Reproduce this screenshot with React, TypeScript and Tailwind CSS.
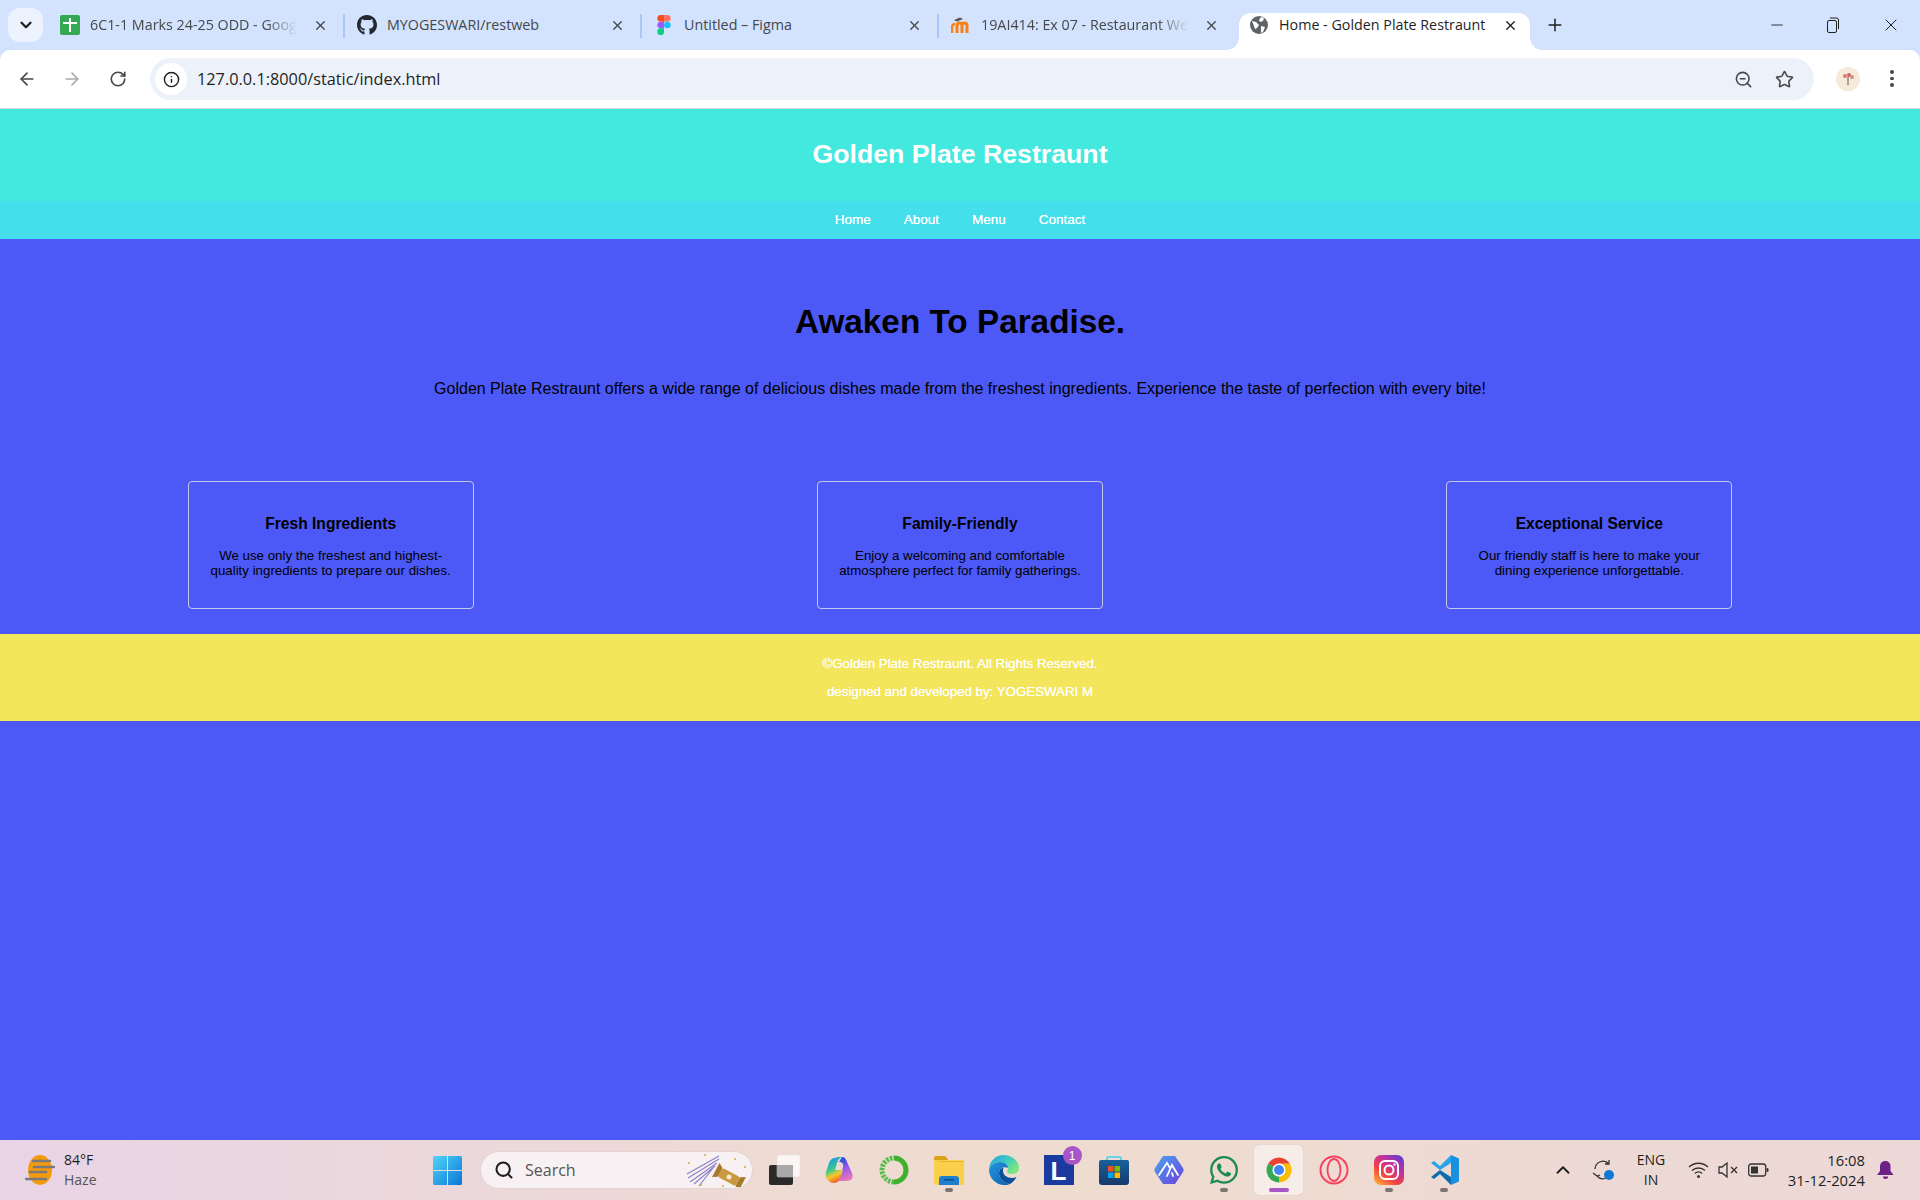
import { ArrowLeft, ArrowRight, RotateCw, Info, ZoomOut, Star, Plus, X, Minus, ChevronDown, ChevronUp, Search } from 'lucide-react';
import { FaGithub, FaWhatsapp } from 'react-icons/fa';
import { ReactNode } from 'react';

const cards = [
  { title: 'Fresh Ingredients', text: 'We use only the freshest and highest-quality ingredients to prepare our dishes.' },
  { title: 'Family-Friendly', text: 'Enjoy a welcoming and comfortable atmosphere perfect for family gatherings.' },
  { title: 'Exceptional Service', text: 'Our friendly staff is here to make your dining experience unforgettable.' },
];

function SheetsIcon() {
  return (
    <svg width="20" height="20" viewBox="0 0 20 20">
      <rect width="20" height="20" rx="2" fill="#34a853" />
      <path d="M10 3v14M3 8h14" stroke="#fff" strokeWidth="2" />
    </svg>
  );
}

function FigmaIcon() {
  return (
    <svg width="14" height="20" viewBox="0 0 14 21">
      <path d="M3.5 0H7v7H3.5a3.5 3.5 0 0 1 0-7z" fill="#f24e1e" />
      <path d="M7 0h3.5a3.5 3.5 0 0 1 0 7H7z" fill="#ff7262" />
      <path d="M3.5 7H7v7H3.5a3.5 3.5 0 0 1 0-7z" fill="#a259ff" />
      <circle cx="10.5" cy="10.5" r="3.5" fill="#1abcfe" />
      <path d="M3.5 14H7v3.5A3.5 3.5 0 1 1 3.5 14z" fill="#0acf83" />
    </svg>
  );
}

function MoodleIcon() {
  return (
    <svg width="20" height="18" viewBox="0 0 20 18">
      <path d="M3 4l6-2.5 3 1.5-6 2.5z" fill="#555" />
      <path d="M6 17V9.5a2.5 2.5 0 0 1 5 0V17M11 17V9.5a2.5 2.5 0 0 1 5 0V17" fill="none" stroke="#f98012" strokeWidth="3" />
      <path d="M1 17v-6a3 3 0 0 1 3-3" fill="none" stroke="#f98012" strokeWidth="2.5" />
    </svg>
  );
}

function GlobeIcon() {
  return (
    <svg width="20" height="20" viewBox="0 0 20 20">
      <circle cx="10" cy="10" r="9" fill="#5f6368" />
      <path d="M3 6l4 1 3 3-2 3-2 1-1-3zM12 2l3 1-1 3-3 1-1-2zM12 11l4 1-2 5-2 1z" fill="#fff" />
    </svg>
  );
}

function Tab({ icon, title, fade }: { icon: ReactNode; title: string; fade?: boolean }) {
  return (
    <div className="flex h-[50px] w-[297px] shrink-0 items-center pl-3 pr-[17px]">
      <span className="flex w-5 shrink-0 justify-center">{icon}</span>
      <span className={`ml-[10px] whitespace-nowrap text-[14.3px] text-[#45474a] ${fade ? '[mask-image:linear-gradient(to_right,black_85%,transparent)]' : ''}`}>{title}</span>
      <X size={15} strokeWidth={2.2} className="ml-auto text-[#45474a]" />
    </div>
  );
}

function WinLogo() {
  return (
    <svg width="29" height="29" viewBox="0 0 29 29">
      <defs>
        <linearGradient id="wl" x1="0" y1="0" x2="1" y2="1">
          <stop offset="0" stopColor="#4fd4f7" />
          <stop offset="1" stopColor="#0a77d6" />
        </linearGradient>
      </defs>
      <path d="M0 1.5A1.5 1.5 0 0 1 1.5 0H14v14H0zM15 0h12.5A1.5 1.5 0 0 1 29 1.5V14H15zM0 15h14v14H1.500A1.500 1.500 0 0 1 0 27.500zM15 15h14v12.500a1.500 1.500 0 0 1-1.500 1.500H15z" fill="url(#wl)" />
    </svg>
  );
}

function Popper() {
  return (
    <svg width="62" height="34" viewBox="0 0 62 34">
      <g stroke="#8d84c6" strokeWidth="1.2" fill="none">
        <path d="M2 21L34 3M3 25L34 6M5 29L32 10M9 31L30 13M14 33L28 15" />
      </g>
      <g transform="rotate(28 44 24)">
        <rect x="34" y="19" width="20" height="10" rx="2" fill="#c9993f" />
        <path d="M34 19l-5-3v16l5-3zM54 19l5-3v16l-5-3z" fill="#a77a2a" />
        <circle cx="44" cy="24" r="2.500" fill="#f6e8c8" />
      </g>
      <g fill="#d6a93c">
        <circle cx="4" cy="10" r="1" /><circle cx="20" cy="2" r="1" /><circle cx="50" cy="6" r="1" /><circle cx="60" cy="14" r="1" /><circle cx="16" cy="32" r="1" /><circle cx="38" cy="33" r="1" />
      </g>
    </svg>
  );
}

function Stack() {
  return (
    <svg width="34" height="32" viewBox="0 0 34 32">
      <rect x="2" y="11" width="24" height="20" rx="2" fill="#2a2a2a" />
      <rect x="10" y="1" width="23" height="22" rx="2" fill="#ffffff" fillOpacity=".75" stroke="#ddd" strokeWidth=".5" />
      <rect x="10" y="11" width="16" height="12" fill="#a9a9a9" />
    </svg>
  );
}

function Copilot() {
  return (
    <svg width="30" height="30" viewBox="0 0 30 30">
      <defs>
        <linearGradient id="cp1" x1="0.3" y1="0" x2="0.6" y2="1">
          <stop offset="0" stopColor="#1596e8" />
          <stop offset=".45" stopColor="#39c98e" />
          <stop offset=".7" stopColor="#f5c92e" />
          <stop offset="1" stopColor="#f0552a" />
        </linearGradient>
        <linearGradient id="cp2" x1="0.4" y1="0" x2="0.7" y2="1">
          <stop offset="0" stopColor="#1550d8" />
          <stop offset=".45" stopColor="#9a55ee" />
          <stop offset="1" stopColor="#f07ab8" />
        </linearGradient>
      </defs>
      <path d="M18 2c3 0 4 2 5 5l5 11c2 5-1 8-5 8H12c3-1 4-4 5-7l2-7c1-3-1-5-4-5z" fill="url(#cp2)" />
      <path d="M11 3c1-1 3-1 7-1-3 1-4 3-5 6l-2 7 8 0-2 6c-1 4-3 7-7 7-3 0-4-1-5-2-3-2-4-5-3-9l3-9c1-3 3-5 6-5z" fill="url(#cp1)" />
    </svg>
  );
}

function GreenRing() {
  return (
    <svg width="30" height="30" viewBox="0 0 30 30">
      <path d="M15 3a12 12 0 0 1 0 24" fill="none" stroke="#3eb22c" strokeWidth="5" />
      <path d="M15 27a12 12 0 0 1 0-24" fill="none" stroke="#56bd48" strokeWidth="5" strokeDasharray="2.500 1.200" />
    </svg>
  );
}

function Folder() {
  return (
    <svg width="30" height="30" viewBox="0 0 30 30">
      <path d="M0 3a2 2 0 0 1 2-2h9l3 3v6H0z" fill="#d9a21c" />
      <path d="M0 5h28a2 2 0 0 1 2 2v21a2 2 0 0 1-2 2H2a2 2 0 0 1-2-2z" fill="#fbcf4a" />
      <rect x="5" y="6" width="25" height="1" fill="#e8b530" />
      <path d="M5 24a3 3 0 0 1 3-3h14a3 3 0 0 1 3 3v6H5z" fill="#1d7fc9" />
      <rect x="10" y="24" width="10" height="1.500" fill="#0c4f8f" />
    </svg>
  );
}

function Edge() {
  return (
    <svg width="30" height="30" viewBox="0 0 30 30">
      <defs>
        <linearGradient id="eg" x1="0" y1="0" x2="1" y2=".6">
          <stop offset="0" stopColor="#1f9fdc" />
          <stop offset=".55" stopColor="#3fc9c4" />
          <stop offset="1" stopColor="#7de77a" />
        </linearGradient>
        <linearGradient id="eb" x1="0" y1="0" x2="1" y2="1">
          <stop offset="0" stopColor="#2398df" />
          <stop offset="1" stopColor="#0d5fae" />
        </linearGradient>
      </defs>
      <path d="M15 0c8 0 15 6 15 13 0 4-3 6-7 6-3 0-5-1-5-3 0-1 1-1 1-3 0-3-3-6-8-6C6 7 1 10 0 15 0 6 7 0 15 0z" fill="url(#eg)" />
      <path d="M0 15c1-5 6-8 11-8 5 0 8 3 8 6-5-2-9 1-9 5 0 5 4 10 11 11-2 1-4 1-6 1C7 30 0 23 0 15z" fill="url(#eb)" />
      <path d="M10 18c0-3 2-5 5-5.500-1 1-1 2-1 3.500 0 4 4 7 9 7 1.500 0 3-.3 4.500-1-1.500 3-4 5.500-6.500 7-7-1-11-6-11-11z" fill="#0a4f9c" />
    </svg>
  );
}

function StoreBag() {
  return (
    <svg width="30" height="30" viewBox="0 0 30 30">
      <defs>
        <linearGradient id="st" x1="0" y1="0" x2="0" y2="1">
          <stop offset="0" stopColor="#1a5f99" />
          <stop offset="1" stopColor="#163a6c" />
        </linearGradient>
      </defs>
      <path d="M8 6V3.500A1.500 1.500 0 0 1 9.500 2h11A1.500 1.500 0 0 1 22 3.500V6" fill="none" stroke="#3fd0f0" strokeWidth="1.600" />
      <path d="M0 7a2 2 0 0 1 2-2h26a2 2 0 0 1 2 2v20a3 3 0 0 1-3 3H3a3 3 0 0 1-3-3z" fill="url(#st)" />
      <rect x="9" y="11" width="5.500" height="5.500" fill="#f25022" />
      <rect x="15.500" y="11" width="5.500" height="5.500" fill="#7fba00" />
      <rect x="9" y="17.500" width="5.500" height="5.500" fill="#00a4ef" />
      <rect x="15.500" y="17.500" width="5.500" height="5.500" fill="#ffb900" />
    </svg>
  );
}

function ArcHex() {
  return (
    <svg width="30" height="30" viewBox="0 0 30 30">
      <defs>
        <linearGradient id="ah" x1="0" y1="0" x2="1" y2="1">
          <stop offset="0" stopColor="#4aa6ec" />
          <stop offset="1" stopColor="#6a3fe0" />
        </linearGradient>
      </defs>
      <path d="M9 1h12l8 12a4 4 0 0 1 0 4l-8 12H9L1 17a4 4 0 0 1 0-4z" fill="url(#ah)" />
      <path d="M5 20l8-12 3 5M13 21l5-11 6 10M19 21l-1-3" fill="none" stroke="#fff" strokeWidth="1.800" strokeLinecap="round" />
    </svg>
  );
}

function Chrome() {
  return (
    <svg width="30" height="30" viewBox="0 0 48 48">
      <path d="M24 24L6.680 14A20 20 0 0 1 41.320 14H24z" fill="#ea4335" />
      <path d="M24 24V14H41.320A20 20 0 0 1 24 44z" fill="#fbbc04" />
      <path d="M24 24V44A20 20 0 0 1 6.680 14z" fill="#34a853" />
      <circle cx="24" cy="24" r="10.500" fill="#fff" />
      <circle cx="24" cy="24" r="8" fill="#4285f4" />
    </svg>
  );
}

function Opera() {
  return (
    <svg width="30" height="30" viewBox="0 0 30 30" fill="none" stroke="#f5435f">
      <circle cx="15" cy="15" r="13.500" strokeWidth="2" />
      <ellipse cx="15" cy="15" rx="6.500" ry="11" strokeWidth="1.800" />
    </svg>
  );
}

function Instagram() {
  return (
    <svg width="30" height="30" viewBox="0 0 30 30">
      <defs>
        <linearGradient id="ig" x1="0.1" y1="1" x2="0.9" y2="0">
          <stop offset="0" stopColor="#fdb03a" />
          <stop offset=".35" stopColor="#f2413e" />
          <stop offset=".65" stopColor="#c4319f" />
          <stop offset="1" stopColor="#5b3fd0" />
        </linearGradient>
      </defs>
      <rect width="30" height="30" rx="7" fill="url(#ig)" />
      <rect x="6" y="6" width="18" height="18" rx="5" fill="none" stroke="#fff" strokeWidth="2" />
      <circle cx="15" cy="15" r="4.500" fill="none" stroke="#fff" strokeWidth="2" />
      <circle cx="20.500" cy="9.500" r="1.200" fill="#fff" />
    </svg>
  );
}

function VSCode() {
  return (
    <svg width="30" height="30" viewBox="0 0 30 30">
      <path d="M22 8L11 15 2 8 5 6l6 5L22 0z" fill="#2aa4ea" />
      <path d="M22 22L11 15 2 22l3 2 6-5 11 11z" fill="#0a6db3" />
      <path d="M22 0l8 3.500v23L22 30z" fill="#1b90df" />
    </svg>
  );
}

function Dot({ color = '#7c7470', wide }: { color?: string; wide?: boolean }) {
  return <span className={`absolute bottom-[3px] left-1/2 h-[4px] -translate-x-1/2 rounded-full ${wide ? 'w-[20px]' : 'w-[8px]'}`} style={{ backgroundColor: color }} />;
}

function Pin({ children, dot, active }: { children: ReactNode; dot?: boolean; active?: boolean }) {
  return (
    <div className="flex w-[55px] shrink-0 justify-center">
      <div className={`relative flex h-[50px] w-[49px] items-center justify-center rounded-[5px] ${active ? 'bg-[#f6ece8] shadow-[0_0_1px_rgba(0,0,0,0.2)]' : ''}`}>
        {children}
        {dot && <Dot />}
        {active && <Dot color="#a855c8" wide />}
      </div>
    </div>
  );
}

export default function App() {
  return (
    <div className="flex h-[1200px] w-[1920px] flex-col overflow-hidden bg-[#4c59f6] font-['Liberation_Sans',sans-serif]">
      {/* browser chrome */}
      <div className="bg-[#d3e3fd] font-['Open_Sans',sans-serif]">
        <div className="flex h-[50px] items-start">
          <div className="ml-2 mt-2 flex h-[34px] w-[35px] shrink-0 items-center justify-center rounded-xl bg-[#ecf2fe]">
            <ChevronDown size={18} strokeWidth={3} className="text-[#1f1f1f]" />
          </div>
          <div className="ml-[5px]"><div className="flex">
            <div className="relative"><Tab icon={<SheetsIcon />} title="6C1-1 Marks 24-25 ODD - Goog" fade /><div className="absolute right-0 top-[14px] h-[24px] w-[2px] bg-[#a8c7fa]" /></div>
            <div className="relative"><Tab icon={<FaGithub size={22} className="text-[#24292f]" />} title="MYOGESWARI/restweb" /><div className="absolute right-0 top-[14px] h-[24px] w-[2px] bg-[#a8c7fa]" /></div>
            <div className="relative"><Tab icon={<FigmaIcon />} title="Untitled – Figma" /><div className="absolute right-0 top-[14px] h-[24px] w-[2px] bg-[#a8c7fa]" /></div>
            <div className="w-[300px]"><Tab icon={<MoodleIcon />} title="19AI414: Ex 07 - Restaurant We" fade /></div>
          </div></div>
          <div className="relative mt-[13px] flex h-[37px] w-[291px] shrink-0 items-center rounded-t-[12px] bg-white pb-[13px] pl-[10px] pr-3">
            <div className="absolute -left-[12px] bottom-0 h-3 w-3 bg-[radial-gradient(circle_at_0_0,transparent_11.500px,white_12px)]" />
            <div className="absolute -right-[12px] bottom-0 h-3 w-3 bg-[radial-gradient(circle_at_100%_0,transparent_11.500px,white_12px)]" />
            <GlobeIcon />
            <span className="ml-[10px] whitespace-nowrap text-[14.3px] text-[#1f1f1f]">Home - Golden Plate Restraunt</span>
            <X size={15} strokeWidth={2.2} className="ml-auto text-[#1f1f1f]" />
          </div>
          <Plus size={20} strokeWidth={1.8} className="ml-[15px] mt-[15px] text-[#1f1f1f]" />
          <div className="ml-auto mt-[15px] flex items-center text-[#1f1f1f]">
            <Minus size={18} strokeWidth={1.2} className="mr-[40px]" />
            <svg width="14" height="16" viewBox="0 0 14 16" fill="none" stroke="currentColor" className="mr-[41px]"><rect x="1.500" y="3.500" width="9" height="12" rx="1.500" /><path d="M4 1h6.500A2 2 0 0 1 12.500 3v9" /></svg>
            <X size={20} strokeWidth={1.2} className="mr-[19px]" />
          </div>
        </div>
        <div className="flex h-[59px] items-start rounded-t-[10px] border-b border-[#d5d7dc] bg-white">
          <div className="flex h-[58px] w-[150px] shrink-0 items-center">
            <ArrowLeft size={20} strokeWidth={2} className="ml-[17px] text-[#45474a]" />
            <ArrowRight size={20} strokeWidth={2} className="ml-[25px] text-[#a9abad]" />
            <RotateCw size={18} strokeWidth={2.2} className="ml-[27px] text-[#45474a]" />
          </div>
          <div className="mt-2 flex h-[42px] w-[1664px] items-center rounded-full bg-[#edf2fa] pl-[5px] pr-[20px]">
            <div className="flex h-8 w-8 items-center justify-center rounded-full bg-white">
              <Info size={17} strokeWidth={2} className="text-[#1f1f1f]" />
            </div>
            <span className="ml-[10px] text-[16.3px] text-[#1f1f1f]">127.0.0.1:8000/static/index.html</span>
            <ZoomOut size={19} strokeWidth={2} className="ml-auto text-[#45474a]" />
            <Star size={19} strokeWidth={2} className="ml-[22px] text-[#45474a]" />
          </div>
          <div className="mt-[17px] ml-[22px] flex h-6 w-6 items-center justify-center rounded-full bg-[#f6ead8]">
            <svg width="14" height="14" viewBox="0 0 14 14"><circle cx="4" cy="4" r="2" fill="#d77" /><circle cx="8" cy="3" r="2" fill="#c66" /><circle cx="11" cy="5" r="2" fill="#d88" /><path d="M7 5v8" stroke="#555" /></svg>
          </div>
          <div className="ml-[30px] mt-[20px] flex flex-col gap-[3px]">
            <span className="h-[3.5px] w-[3.5px] rounded-full bg-[#45474a]" />
            <span className="h-[3.5px] w-[3.5px] rounded-full bg-[#45474a]" />
            <span className="h-[3.5px] w-[3.5px] rounded-full bg-[#45474a]" />
          </div>
        </div>
      </div>

      {/* page */}
      <header className="flex h-[92px] shrink-0 items-center justify-center bg-[#43e9de] pb-[2px]">
        <h1 className="text-[26.7px] font-bold text-white">Golden Plate Restraunt</h1>
      </header>
      <nav className="flex h-[38px] shrink-0 items-center justify-center gap-[33px] bg-[#45dfec] text-[13.5px] text-white [text-shadow:0_0_0.6px_white]">
        <a>Home</a>
        <a>About</a>
        <a>Menu</a>
        <a>Contact</a>
      </nav>
      <main className="flex h-[395px] shrink-0 flex-col items-center pt-[63px]">
        <h2 className="text-[33.3px] font-bold leading-[40px] text-black">Awaken To Paradise.</h2>
        <p className="mt-[37px] text-[16px] leading-[20px] text-black">Golden Plate Restraunt offers a wide range of delicious dishes made from the freshest ingredients. Experience the taste of perfection with every bite!</p>
        <div className="mt-[82px] flex w-full justify-around px-4">
          {cards.map(card => (
            <div key={card.title} className="flex h-[128px] w-[286px] flex-col items-center rounded-[4px] border border-[#c3c7e8] px-4 pt-[32px] text-center text-black">
              <h3 className="text-[15.6px] font-bold leading-[20px]">{card.title}</h3>
              <p className="mt-[14px] text-[13.3px] leading-[15px]">{card.text}</p>
            </div>
          ))}
        </div>
      </main>
      <footer className="flex h-[87px] shrink-0 flex-col items-center bg-[#f3e55c] pt-[22px] text-[13.3px] text-white [text-shadow:0_0_0.6px_white]">
        <p className="leading-[16px]">©Golden Plate Restraunt. All Rights Reserved.</p>
        <p className="mt-[12px] leading-[16px]">designed and developed by: YOGESWARI M</p>
      </footer>
      <div className="flex-1" />

      {/* taskbar */}
      <div className="flex h-[60px] shrink-0 items-center bg-[linear-gradient(to_right,#e8d4e5,#efdccf_50%,#ecd8d6)] font-['Open_Sans',sans-serif] text-[#1f1f1f]">
        <div className="flex w-[433px] shrink-0 items-center pl-[25px]">
          <svg width="30" height="30" viewBox="0 0 30 30">
            <ellipse cx="15" cy="15" rx="12" ry="15" fill="#f59a0c" />
            <path d="M8 6h17M9 12h20M5 17h16M1 24h20" stroke="#7a7a7a" strokeWidth="2.500" strokeLinecap="round" />
          </svg>
          <div className="ml-[9px] text-[14px] leading-[20px]">
            <p>84°F</p>
            <p className="text-[#555]">Haze</p>
          </div>
        </div>
        <WinLogo />
        <div className="ml-[18px] flex h-[38px] w-[273px] shrink-0 items-center rounded-full border border-[#e4d4d0] bg-[#f8f1f3] pl-[13px] pr-[5px]">
          <Search size={20} strokeWidth={2.5} className="text-[#1f1f1f]" />
          <span className="ml-[11px] text-[16px] text-[#555]">Search</span>
          <span className="ml-auto flex"><Popper /></span>
        </div>
        <div className="ml-[3px] flex">
          <Pin><Stack /></Pin>
          <Pin><Copilot /></Pin>
          <Pin><GreenRing /></Pin>
          <Pin dot><Folder /></Pin>
          <Pin><Edge /></Pin>
          <Pin>
            <div className="relative flex h-[30px] w-[30px] items-end justify-center bg-[#1b3a9f] font-['Liberation_Sans',sans-serif] text-[26px] font-bold leading-[28px] text-white">
              L
              <span className="absolute -right-[8px] -top-[9px] flex h-[19px] w-[19px] items-center justify-center rounded-full bg-[#a855c8] text-[12px] font-normal leading-none">1</span>
            </div>
          </Pin>
          <Pin><StoreBag /></Pin>
          <Pin><ArcHex /></Pin>
          <Pin dot><FaWhatsapp size={32} className="text-[#1c8a55]" /></Pin>
          <Pin active><Chrome /></Pin>
          <Pin><Opera /></Pin>
          <Pin dot><Instagram /></Pin>
          <Pin dot><VSCode /></Pin>
        </div>
        <ChevronUp size={22} strokeWidth={2} className="ml-[81px]" />
        <div className="relative ml-[18px] h-[22px] w-[22px]">
          <svg width="22" height="22" viewBox="0 0 22 22" fill="none" stroke="#333" strokeWidth="1.300"><path d="M3 10a8 8 0 0 1 14-5M17 1v4h-4M19 12a8 8 0 0 1-14 5M1 14l4 3 3-1" /></svg>
          <span className="absolute bottom-[1px] right-[0px] h-[10px] w-[10px] rounded-full bg-[#0f78d4]" />
        </div>
        <div className="ml-[17px] w-[40px] text-center text-[14px] leading-[20px]">
          <p>ENG</p>
          <p>IN</p>
        </div>
        <svg width="21" height="18" viewBox="0 0 21 18" fill="none" stroke="#333" strokeWidth="1.400" className="ml-[17px]"><path d="M1 6a14 14 0 0 1 19 0M4 9.500a9.500 9.500 0 0 1 13 0M7 12.500a5 5 0 0 1 7 0" /><circle cx="10.500" cy="15.500" r="1.500" fill="#333" stroke="none" /></svg>
        <svg width="20" height="18" viewBox="0 0 20 18" fill="none" stroke="#333" strokeWidth="1.300" className="ml-[9px]"><path d="M1 6h3l5-4v14l-5-4H1zM13 6l6 6M19 6l-6 6" /></svg>
        <svg width="21" height="14" viewBox="0 0 21 14" fill="none" className="ml-[10px]"><rect x=".700" y="1" width="17" height="12" rx="2.500" stroke="#333" strokeWidth="1.300" /><rect x="3" y="3.500" width="7" height="7" fill="#333" /><rect x="18.500" y="5" width="2" height="4" rx="1" fill="#333" /></svg>
        <div className="ml-auto text-right text-[14.8px] leading-[20px]">
          <p>16:08</p>
          <p>31-12-2024</p>
        </div>
        <svg width="17" height="19" viewBox="0 0 17 19" className="ml-[12px] mr-[26px]"><path d="M8.500 0a5 5 0 0 1 5 5v5l3 4H0l3-4V5a5 5 0 0 1 5.500-5z" fill="#6b2185" /><path d="M6 15.500h5a2.500 2.500 0 0 1-5 0z" fill="#6b2185" /></svg>
      </div>
    </div>
  );
}
